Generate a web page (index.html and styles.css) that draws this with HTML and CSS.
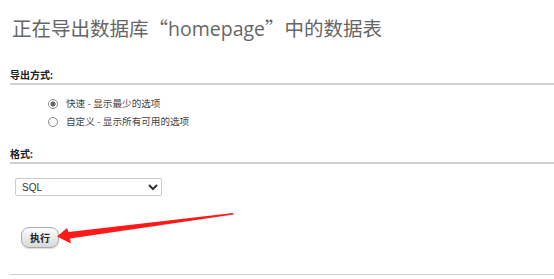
FILE: index.html
```html
<!DOCTYPE html>
<html lang="zh-CN">
<head>
    <meta charset="utf-8">
    <title>导出</title>
    <link rel="stylesheet" href="styles.css">
</head>
<body>
    <div class="export-page">
        <h2 class="page-title">正在导出数据库<span class="q">“</span>homepage<span class="q">”</span>中的数据表</h2>

        <div class="group">
            <div class="group-title">导出方式:</div>
            <ul class="radio-list">
                <li><label><input type="radio" name="quick_or_custom" checked> 快速 - 显示最少的选项</label></li>
                <li><label><input type="radio" name="quick_or_custom"> 自定义 - 显示所有可用的选项</label></li>
            </ul>
        </div>

        <div class="group">
            <div class="group-title">格式:</div>
            <div class="format-row">
                <select class="format-select" name="what">
                    <option>SQL</option>
                </select>
            </div>
        </div>

        <div class="submit-row">
            <button class="btn-go" type="button">执行</button>
        </div>

        <div class="bottom-line"></div>
    </div>

    <!-- annotation arrow -->
    <svg class="mark-arrow" width="554" height="279" viewBox="0 0 554 279">
        <polygon points="57,236.5 67,228 68.5,232 233,213 233.5,214.5 70,238.5 71,243.5" fill="#ff1a1a" />
    </svg>
</body>
</html>
```

FILE: styles.css
```css
body {
    margin: 0;
    font-family: "Open Sans", "Noto Sans CJK SC", sans-serif;
    color: #333;
    background: #fff;
}

.export-page {
    padding-left: 10px;
}

.page-title {
    margin: 0;
    padding-top: 16px;
    padding-left: 2px;
    font-size: 19.5px;
    line-height: 24px;
    font-weight: normal;
    color: #666;
}

.page-title .q {
    font-family: "Noto Sans CJK SC", sans-serif;
    font-feature-settings: "fwid";
}

.group-title {
    font-size: 10px;
    line-height: 12px;
    font-weight: bold;
    color: #222;
    padding-bottom: 2px;
    border-bottom: 2px solid #d0d0d0;
}

.group:first-of-type .group-title {
    margin-top: 28px;
}

.radio-list {
    list-style-type: none;
    margin: 0;
    padding: 10px 0 0 38px;
}

.radio-list li {
    height: 18px;
    display: flex;
    align-items: center;
}

.radio-list label {
    display: flex;
    align-items: center;
    gap: 8px;
    font-size: 9.6px;
    line-height: 18px;
    color: #444;
}

.radio-list input {
    appearance: none;
    margin: 0;
    width: 10px;
    height: 10px;
    border: 1px solid #8a8a8a;
    border-radius: 50%;
    background: #fff;
}

.radio-list input:checked {
    background: radial-gradient(circle, #666 0 2.3px, #fff 2.8px);
}

.group + .group .group-title {
    margin-top: 17px;
}

.format-row {
    display: flex;
    padding: 14px 0 0 5px;
}

.format-select {
    width: 147px;
    height: 18px;
    margin: 0;
    padding: 0 2px;
    font-family: "Liberation Sans", sans-serif;
    font-size: 10px;
    color: #333;
    border: 1px solid #ccc;
    border-radius: 2px;
    background: #fff;
}

.submit-row {
    display: flex;
    padding: 31px 0 0 11px;
}

.btn-go {
    width: 38px;
    height: 21px;
    padding: 0;
    font-family: "Noto Sans CJK SC", sans-serif;
    font-size: 10px;
    font-weight: bold;
    color: #222;
    border: 1px solid #aaa;
    border-radius: 8px;
    background: linear-gradient(#fdfdfd, #d8d8d8);
    box-shadow: 0 1px 1px rgba(0, 0, 0, 0.15);
}

.bottom-line {
    margin-top: 26px;
    border-top: 1px solid #cfcfcf;
}

.mark-arrow {
    position: absolute;
    left: 0;
    top: 0;
    pointer-events: none;
}
```
